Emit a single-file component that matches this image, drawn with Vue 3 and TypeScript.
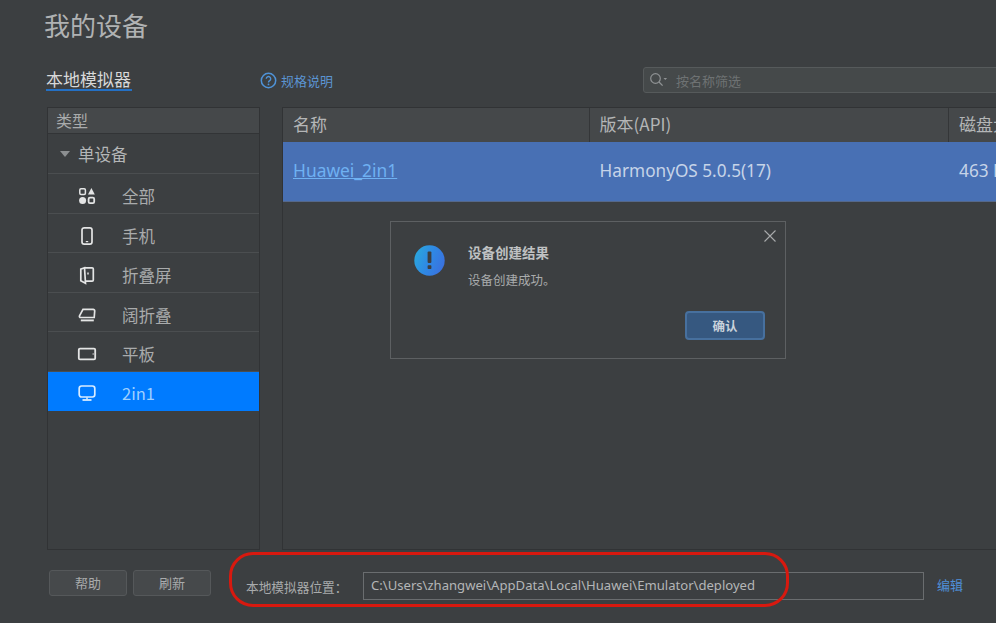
<script setup lang="ts">
interface Item { label: string; icon: string; active?: boolean }
const items: Item[] = [
  { label: '全部', icon: 'all' },
  { label: '手机', icon: 'phone' },
  { label: '折叠屏', icon: 'fold' },
  { label: '阔折叠', icon: 'wide' },
  { label: '平板', icon: 'tablet' },
  { label: '2in1', icon: 'pc', active: true },
]
</script>

<template>
  <div class="page">
    <h1 class="title">我的设备</h1>

    <div class="toolbar">
      <div class="tab">本地模拟器</div>
      <a class="spec">
        <svg width="17" height="17" viewBox="0 0 17 17" fill="none">
          <circle cx="8.5" cy="8.5" r="7.2" stroke="#4f93d8" stroke-width="1.5" />
          <path d="M6.3 6.7a2.2 2.2 0 1 1 3.4 1.9c-.8.5-1.2.9-1.2 1.8" stroke="#4f93d8" stroke-width="1.4" />
          <circle cx="8.5" cy="12.4" r=".9" fill="#4f93d8" />
        </svg>
        <span>规格说明</span>
      </a>
      <div class="search">
        <svg width="19" height="16" viewBox="0 0 19 16" fill="none">
          <circle cx="6.5" cy="6.5" r="4.8" stroke="#8f9294" stroke-width="1.2" />
          <path d="M10 10l3.6 3.6" stroke="#8f9294" stroke-width="1.3" />
          <path d="M14.5 6h3.6l-1.8 2z" fill="#8f9294" />
        </svg>
        <span>按名称筛选</span>
      </div>
    </div>

    <div class="main">
      <aside class="types">
        <div class="types-head">类型</div>
        <div class="group"><i class="caret"></i>单设备</div>
        <div v-for="item in items" :key="item.label" class="row" :class="{ active: item.active }">
          <span class="icon">
            <svg width="20" height="20" viewBox="0 0 20 20" fill="none" stroke="currentColor" stroke-width="1.7">
              <template v-if="item.icon === 'all'">
                <rect x="2.8" y="2.8" width="5.6" height="5.6" rx="1.2" stroke-width="1.5" />
                <path d="M14.4 2l3.4 6.4h-6.8z" fill="currentColor" stroke="none" />
                <circle cx="5.6" cy="14.4" r="3.5" fill="currentColor" stroke="none" />
                <rect x="11.6" y="11.6" width="5.6" height="5.6" rx="1.4" stroke-width="1.8" />
              </template>
              <template v-else-if="item.icon === 'phone'">
                <rect x="5" y="1.8" width="10" height="16.4" rx="2.2" />
                <path d="M8.8 15.6h2.4" stroke-width="1.2" />
              </template>
              <template v-else-if="item.icon === 'fold'">
                <path d="M7.5 2.8h7.6a1.2 1.2 0 0 1 1.2 1.2v11a1.2 1.2 0 0 1-1.2 1.2H8.5" />
                <path d="M7.5 2.8L3.8 4.2v11.6l4.7 2.4z" />
                <path d="M11 7.6v1.8" stroke-width="1.5" />
              </template>
              <template v-else-if="item.icon === 'wide'">
                <path d="M6 4.4h10.2a1.5 1.5 0 0 1 1.5 1.6l-.5 6.5H3.6a1.2 1.2 0 0 1-1.1-1.7z" />
                <path d="M3.8 15.4h13" stroke-width="1.9" />
              </template>
              <template v-else-if="item.icon === 'tablet'">
                <rect x="1.8" y="4.6" width="16.4" height="10.8" rx="1.2" stroke-width="1.8" />
                <path d="M16.2 9.4v1.2" stroke-width="1.4" />
              </template>
              <template v-else>
                <rect x="2.2" y="3" width="15.6" height="11" rx="2.4" />
                <path d="M5.5 17h9" stroke-width="1.8" />
                <path d="M10 14.2v2.6" stroke-width="1.5" />
              </template>
            </svg>
          </span>
          <span class="row-label">{{ item.label }}</span>
        </div>
      </aside>

      <section class="table">
        <div class="thead">
          <div class="th col-name">名称</div>
          <div class="th col-ver">版本(API)</div>
          <div class="th col-disk">磁盘大小</div>
        </div>
        <div class="tr">
          <div class="td col-name"><a class="device">Huawei_2in1</a></div>
          <div class="td col-ver">HarmonyOS 5.0.5(17)</div>
          <div class="td col-disk">463 MB</div>
        </div>
      </section>
    </div>

    <footer class="footer">
      <button class="btn">帮助</button>
      <button class="btn">刷新</button>
      <span class="loc-label">本地模拟器位置：</span>
      <div class="loc-input">C:\Users\zhangwei\AppData\Local\Huawei\Emulator\deployed</div>
      <a class="edit">编辑</a>
    </footer>

    <div class="dialog">
      <svg class="close" width="14" height="14" viewBox="0 0 14 14" fill="none">
        <path d="M1.5 1.5l11 11M12.5 1.5l-11 11" stroke="#a9abac" stroke-width="1.1" />
      </svg>
      <div class="dialog-body">
        <svg class="alert" width="31" height="31" viewBox="0 0 31 31">
          <defs>
            <linearGradient id="alertFill" x1="0" y1="0.3" x2="1" y2="0.7">
              <stop offset="0" stop-color="#2aa6dc" />
              <stop offset="0.5" stop-color="#2f88e4" />
              <stop offset="1" stop-color="#3b70de" />
            </linearGradient>
          </defs>
          <circle cx="15.5" cy="15.5" r="15.2" fill="url(#alertFill)" />
          <rect x="13.6" y="6.6" width="3.8" height="11.4" rx="1" fill="#3c3f41" />
          <rect x="13.6" y="20.2" width="3.8" height="3.8" rx=".8" fill="#3c3f41" />
        </svg>
        <div>
          <div class="dialog-title">设备创建结果</div>
          <div class="dialog-text">设备创建成功。</div>
        </div>
      </div>
      <div class="dialog-actions"><button class="confirm">确认</button></div>
    </div>

    <div class="callout"></div>
  </div>
</template>

<style scoped>
.page {
  position: relative;
  width: 996px;
  height: 623px;
  overflow: hidden;
  display: flex;
  flex-direction: column;
  background: #3c3f41;
  color: #b4b6b7;
  font-family: "Noto Sans CJK SC", "Noto Sans", sans-serif;
}
.title {
  margin: 0;
  padding: 6px 0 0 44px;
  height: 67px;
  box-sizing: border-box;
  font-size: 26px;
  line-height: 38px;
  font-weight: 400;
  color: #b0b2b3;
}
.toolbar {
  display: flex;
  align-items: center;
  height: 26px;
  padding-left: 46px;
}
.tab {
  flex: none;
  width: 86px;
  font-size: 17px;
  line-height: 24px;
  height: 24px;
  color: #d8d9d9;
  box-shadow: inset 0 -2px 0 #2470c4;
  white-space: nowrap;
  margin-top: -2px;
}
.spec {
  flex: none;
  display: flex;
  align-items: center;
  gap: 4px;
  margin-left: 128px;
  font-size: 13px;
  white-space: nowrap;
  color: #5b94d2;
}
.search {
  flex: none;
  width: 400px;
  height: 26px;
  margin-left: 310px;
  box-sizing: border-box;
  display: flex;
  align-items: center;
  gap: 8px;
  padding-left: 5px;
  background: #45494a;
  border: 1px solid #565a5b;
  border-radius: 3px;
  font-size: 13px;
  white-space: nowrap;
  color: #6e7273;
}
.main {
  display: flex;
  flex: none;
  height: 443px;
  margin: 14px 0 0 47px;
  gap: 22px;
}
.types {
  flex: none;
  width: 213px;
  box-sizing: border-box;
  border: 1px solid #313335;
}
.types-head {
  height: 26px;
  padding-left: 8px;
  font-size: 16px;
  line-height: 25px;
  background: #45484a;
  border-bottom: 1px solid #323436;
  box-sizing: border-box;
  color: #a9abac;
}
.group {
  display: flex;
  align-items: center;
  height: 40px;
  padding-left: 12px;
  box-sizing: border-box;
  border-bottom: 1px solid #4b4e50;
  font-size: 16.5px;
  color: #b4b6b7;
}
.caret {
  width: 0;
  height: 0;
  margin-right: 8px;
  border-left: 5px solid transparent;
  border-right: 5px solid transparent;
  border-top: 6px solid #8c8f91;
}
.row {
  display: flex;
  align-items: center;
  height: 39.5px;
  padding: 6px 0 0 29px;
  box-sizing: border-box;
  border-bottom: 1px solid #4b4e50;
  color: #e4e5e5;
}
.row.active {
  background: #007bff;
  border-bottom: 0;
  padding-top: 3px;
  color: #d8ecff;
}
.icon {
  display: flex;
  width: 20px;
  height: 20px;
}
.row-label {
  margin-left: 25px;
  font-size: 16.5px;
  color: #a9abac;
}
.row.active .row-label {
  color: #9fd0ff;
}
.table {
  flex: none;
  width: 760px;
  box-sizing: border-box;
  border-left: 1px solid #313335;
  border-bottom: 1px solid #313335;
}
.thead, .tr {
  display: flex;
}
.thead {
  height: 35px;
  background: #45484a;
  border-top: 1px solid #313335;
  box-sizing: border-box;
}
.th {
  font-size: 17px;
  line-height: 31px;
  padding-left: 10px;
  box-sizing: border-box;
  white-space: nowrap;
  overflow: hidden;
  color: #b4b6b7;
  border-right: 1px solid #343638;
}
.tr {
  height: 60px;
  align-items: center;
  background: #4870b4;
  border-bottom: 1px solid #55688a;
  box-sizing: border-box;
}
.td {
  font-size: 17.2px;
  line-height: 24px;
  padding: 0 0 2px 10px;
  box-sizing: border-box;
  color: #c6d4e8;
  font-family: "Noto Sans", "Noto Sans CJK SC", sans-serif;
  white-space: nowrap;
}
.col-name { width: 307px; }
.col-ver { width: 360px; }
.col-disk { width: 93px; border-right: 0; overflow: hidden; }
.device {
  color: #6fb1f2;
  text-decoration: underline;
  font-size: 17.4px;
}
.footer {
  flex: 1;
  display: flex;
  align-items: center;
  padding: 0 0 0 49px;
}
.btn {
  flex: none;
  width: 78px;
  height: 26px;
  margin-right: 6px;
  padding: 0;
  background: #46494b;
  border: 1px solid #55585a;
  border-radius: 3px;
  color: #a9abac;
  font: 13px "Noto Sans CJK SC", sans-serif;
  position: relative;
  top: -4px;
}
.btn + .btn { margin-right: 0; }
.loc-label {
  flex: none;
  width: 111px;
  margin-left: 35px;
  font-size: 12.7px;
  white-space: nowrap;
  color: #a9abac;
}
.loc-input {
  flex: none;
  width: 561px;
  height: 28px;
  margin-left: 6px;
  padding-left: 7px;
  box-sizing: border-box;
  border: 1px solid #6a6d6f;
  font: 13.1px/25px "Noto Sans", sans-serif;
  color: #b4b6b7;
  position: relative;
  top: -1px;
}
.edit {
  flex: none;
  margin-left: 13px;
  font-size: 13px;
  color: #4f8fd8;
  position: relative;
  top: -2px;
}
.dialog {
  position: absolute;
  left: 390px;
  top: 221px;
  width: 396px;
  height: 138px;
  box-sizing: border-box;
  background: #3c3f41;
  border: 1px solid #5d6062;
}
.close {
  position: absolute;
  right: 8px;
  top: 7px;
}
.dialog-body {
  display: flex;
  gap: 23px;
  padding: 20px 0 0 23px;
}
.alert {
  margin-top: 3px;
}
.dialog-title {
  font-size: 13.5px;
  line-height: 20px;
  font-weight: 700;
  color: #bfc1c2;
}
.dialog-text {
  font-size: 12.5px;
  line-height: 20px;
  margin-top: 8px;
  color: #a9abac;
}
.dialog-actions {
  display: flex;
  justify-content: flex-end;
  padding: 21px 20px 0 0;
}
.confirm {
  width: 80px;
  height: 29px;
  padding: 0;
  background: #365880;
  border: 2px solid #47709e;
  border-radius: 4px;
  color: #c9d2db;
  font: 700 12.5px "Noto Sans CJK SC", sans-serif;
}
.callout {
  position: absolute;
  left: 229px;
  top: 552px;
  width: 560px;
  height: 55px;
  box-sizing: border-box;
  border: 3px solid #d8190f;
  border-radius: 24px;
}
</style>
